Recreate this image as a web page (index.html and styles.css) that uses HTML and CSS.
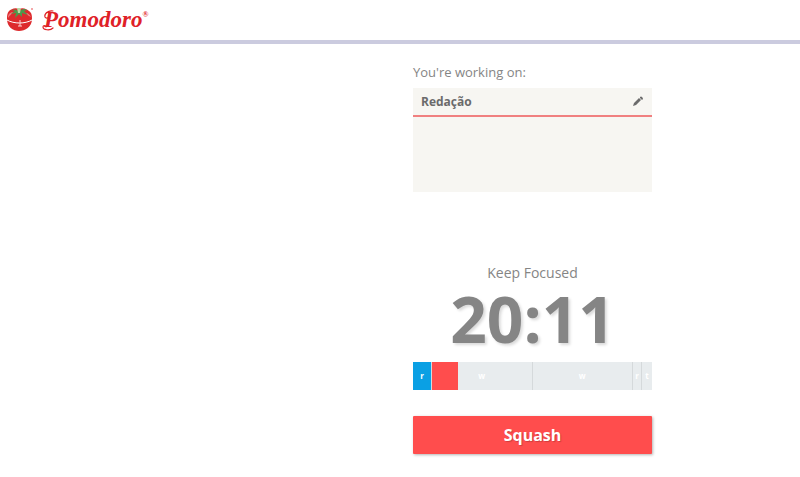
FILE: index.html
```html
<!DOCTYPE html>
<html lang="en">
    <head>
        <meta charset="utf-8">
        <title>Pomodoro</title>
        <link rel="stylesheet" href="styles.css">
    </head>
    <body>
        <header class="header">
            <a class="brand" href="#">
                <svg class="tomato" viewBox="0 0 28 26" aria-hidden="true">
                    <path d="M13 2C9 0 5 2 3 4 1 6 1 9 1 12c0 8 6 12 12 12s13-4 13-12c0-3 0-6-3-8-2-2-6-4-10-2z" fill="#dd2a2d"/>
                    <path d="M2 9c1-3 3-4 5-4-1 2-3 3-5 6zM20 6c2 0 4 2 5 4-2-1-4-2-5-4z" fill="#f0777a"/>
                    <path d="M13 5C10 2 8 2 6 3l3 1-4 3 5-1-1 5 4-4 3 3 0-4 6 2-4-4 3-1c-3-2-5-1-8 2z" fill="#4a9a4c"/>
                    <path d="M11 1l4 0-1 5-2 0z" fill="#b9d9a5"/>
                    <path d="M1 13c7 4 18 4 25 0" fill="none" stroke="#fff" stroke-width="1"/>
                    <path d="M14 13v6M12 19h4" fill="none" stroke="#fbd5d5" stroke-width="1"/>
                    <circle cx="26" cy="2" r="1" fill="#f08a8c"/>
                </svg>
                <span class="wordmark">
                    <svg class="swash" viewBox="0 0 12 22" aria-hidden="true">
                        <path d="M11 2C6 1 2 5 3 8c1 2 4 1 5-1M11 19c-3 3-10 2-10-1 0-2 3-2 3 0" fill="none" stroke="#df2127" stroke-width="1.2" stroke-linecap="round"/>
                    </svg>
                    <span>Pomodoro</span><sup>®</sup>
                </span>
            </a>
        </header>
        <main class="main">
            <div class="timer">
                <h2 class="label">You're working on:</h2>
                <section class="task">
                    <div class="task-head">
                        <strong>Redação</strong>
                        <button class="edit" type="button" aria-label="Edit task">
                            <svg viewBox="0 0 12 12" aria-hidden="true">
                                <path d="M1 10l1-3 5-5 2 2-5 5-3 1zM8 1q1-1 2 0t1 2l-1 1-2-2z" fill="#6b6b6b"/>
                            </svg>
                        </button>
                    </div>
                </section>
                <p class="status">Keep Focused</p>
                <div class="clock">20:11</div>
                <ol class="bar">
                    <li class="done">r</li>
                    <li class="current"><span class="fill" style="width: 26%"></span>w</li>
                    <li>w</li>
                    <li>r</li>
                    <li>t</li>
                </ol>
                <button class="squash" type="button">Squash</button>
            </div>
        </main>
    </body>
</html>
```
FILE: styles.css
```css
body {
margin: 0;
background: #fff;
color: #858585;
font-family: "Open Sans", "Noto Sans", sans-serif;
}
button {
border: none;
font-family: inherit;
cursor: pointer;
}
.header {
padding: 6px;
border-bottom: 4px solid #cbcbdf;
}
.brand {
display: flex;
align-items: center;
gap: 8px;
height: 28px;
color: #df2127;
text-decoration: none;
}
.tomato {
width: 28px;
height: 26px;
}
.wordmark {
display: flex;
align-items: center;
font: italic bold 23px "Liberation Serif", serif;
}
.swash {
width: 12px;
height: 22px;
margin-right: -10px;
}
.wordmark sup {
align-self: flex-start;
font-size: 8px;
line-height: 16px;
}
.main {
display: grid;
grid-template-columns: 413fr 239fr 148fr;
}
.timer {
grid-column: 2;
padding: 20px 0;
}
.label {
margin: 0 0 8px;
font-size: 13px;
font-weight: normal;
line-height: 16px;
}
.task {
height: 104px;
margin: 0 0 71px;
background: #f7f6f2;
}
.task-head {
display: flex;
justify-content: space-between;
align-items: center;
height: 27px;
padding: 0 8px;
border-bottom: 2px solid #f08080;
color: #6b6b6b;
font-size: 12px;
}
.edit {
width: 12px;
height: 16px;
padding: 0;
background: none;
}
.edit svg {
display: block;
width: 12px;
height: 12px;
}
.status {
margin: 0;
font-size: 14px;
line-height: 20px;
text-align: center;
}
.clock {
color: #858585;
font-size: 64px;
font-weight: bold;
line-height: 72px;
text-align: center;
text-shadow: 2px 2px 3px rgba(0,0,0,0.15);
}
.bar {
display: grid;
grid-template-columns: 18fr 100fr 100fr 8fr 10fr;
gap: 1px;
height: 28px;
margin: 7px 0 26px;
padding: 0;
background: #d5d9db;
list-style: none;
}
.bar li {
position: relative;
background: #e8ecee;
color: #fff;
font-size: 8px;
font-weight: bold;
line-height: 28px;
text-align: center;
}
.bar .done {
background: #0aa0e4;
}
/* elapsed part of the running interval */
.fill {
position: absolute;
top: 0;
bottom: 0;
left: 0;
background: #ff4d4d;
}
.squash {
display: block;
width: 100%;
height: 38px;
border-radius: 1px;
background: #ff4d4d;
box-shadow: 1px 1px 3px rgba(0,0,0,0.3);
color: #fff;
font-size: 16px;
font-weight: bold;
text-shadow: 1px 1px 1px rgba(0,0,0,0.2);
}
```
